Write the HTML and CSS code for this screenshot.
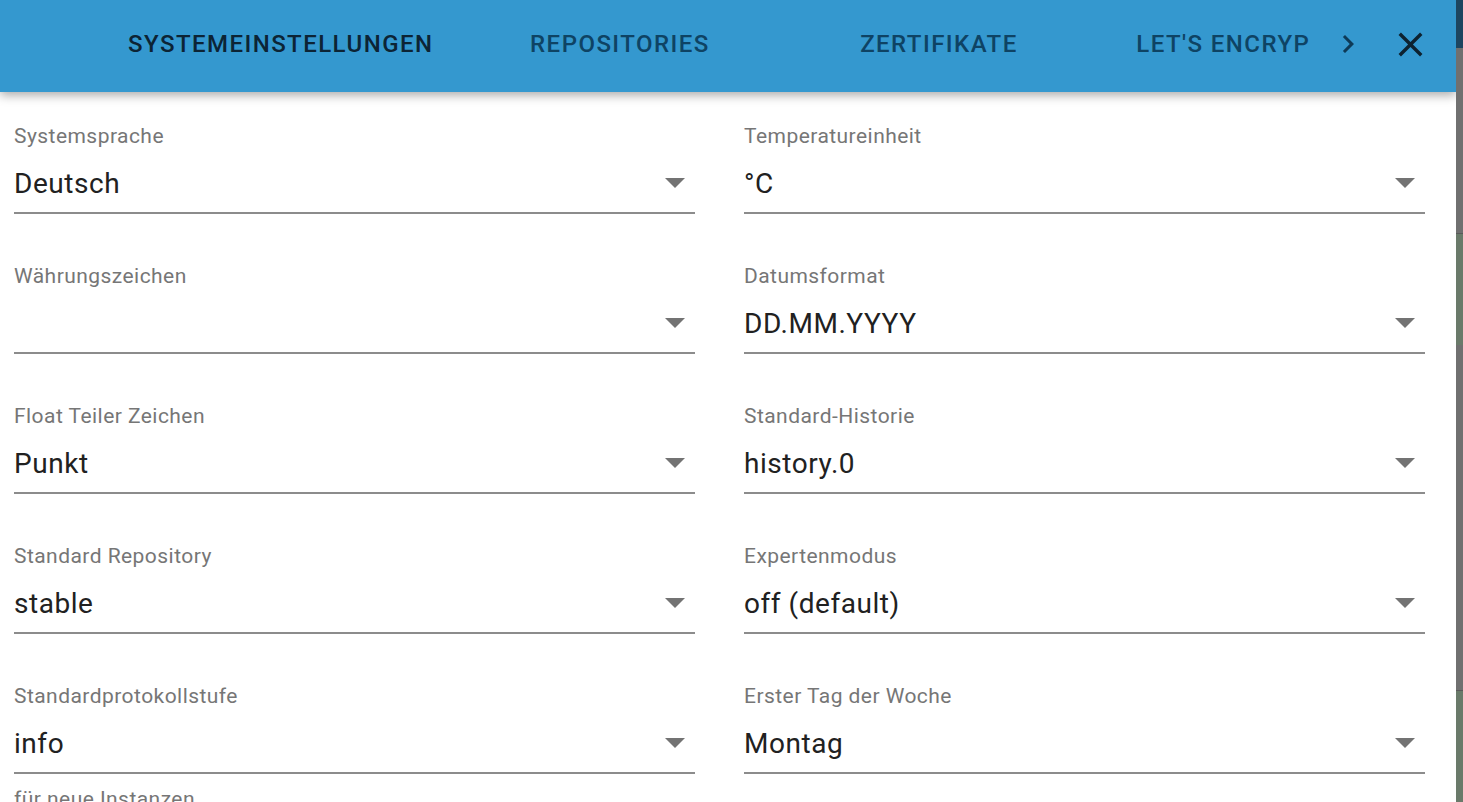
FILE: index.html
```html
<!DOCTYPE html>
<html lang="de">
<head>
    <meta charset="UTF-8">
    <meta name="viewport" content="width=device-width, initial-scale=1.0">
    <title>Systemeinstellungen</title>
    <link rel="stylesheet" href="styles.css">
</head>
<body>

    <div class="page">
        <div class="dialog">
            <!-- Tabs -->
            <div class="dialog-header">
                <div class="tabs">
                    <div class="tab selected">Systemeinstellungen</div>
                    <div class="tab">Repositories</div>
                    <div class="tab">Zertifikate</div>
                    <div class="tab">Let's Encrypt SSL</div>
                    <div class="tab">Standardrechte</div>
                </div>
                <div class="scroll-button">
                    <svg width="36" height="36" viewBox="0 0 24 24"><path d="M10 6L8.59 7.41 13.17 12l-4.58 4.59L10 18l6-6z"/></svg>
                </div>
                <div class="close-button">
                    <svg width="41" height="41" viewBox="0 0 24 24"><path d="M19 6.41L17.59 5 12 10.59 6.41 5 5 6.41 10.59 12 5 17.59 6.41 19 12 13.41 17.59 19 19 17.59 13.41 12z"/></svg>
                </div>
            </div>

            <!-- Settings form -->
            <div class="dialog-content">
                <div class="field">
                    <label>Systemsprache</label>
                    <div class="select"><span>Deutsch</span><svg class="arrow" width="20" height="10" viewBox="0 0 20 10"><path d="M0 0L10 10 20 0z"/></svg></div>
                </div>
                <div class="field">
                    <label>Temperatureinheit</label>
                    <div class="select"><span>°C</span><svg class="arrow" width="20" height="10" viewBox="0 0 20 10"><path d="M0 0L10 10 20 0z"/></svg></div>
                </div>
                <div class="field">
                    <label>Währungszeichen</label>
                    <div class="select"><span></span><svg class="arrow" width="20" height="10" viewBox="0 0 20 10"><path d="M0 0L10 10 20 0z"/></svg></div>
                </div>
                <div class="field">
                    <label>Datumsformat</label>
                    <div class="select"><span>DD.MM.YYYY</span><svg class="arrow" width="20" height="10" viewBox="0 0 20 10"><path d="M0 0L10 10 20 0z"/></svg></div>
                </div>
                <div class="field">
                    <label>Float Teiler Zeichen</label>
                    <div class="select"><span>Punkt</span><svg class="arrow" width="20" height="10" viewBox="0 0 20 10"><path d="M0 0L10 10 20 0z"/></svg></div>
                </div>
                <div class="field">
                    <label>Standard-Historie</label>
                    <div class="select"><span>history.0</span><svg class="arrow" width="20" height="10" viewBox="0 0 20 10"><path d="M0 0L10 10 20 0z"/></svg></div>
                </div>
                <div class="field">
                    <label>Standard Repository</label>
                    <div class="select"><span>stable</span><svg class="arrow" width="20" height="10" viewBox="0 0 20 10"><path d="M0 0L10 10 20 0z"/></svg></div>
                </div>
                <div class="field">
                    <label>Expertenmodus</label>
                    <div class="select"><span>off (default)</span><svg class="arrow" width="20" height="10" viewBox="0 0 20 10"><path d="M0 0L10 10 20 0z"/></svg></div>
                </div>
                <div class="field">
                    <label>Standardprotokollstufe</label>
                    <div class="select"><span>info</span><svg class="arrow" width="20" height="10" viewBox="0 0 20 10"><path d="M0 0L10 10 20 0z"/></svg></div>
                    <p class="helper">für neue Instanzen</p>
                </div>
                <div class="field">
                    <label>Erster Tag der Woche</label>
                    <div class="select"><span>Montag</span><svg class="arrow" width="20" height="10" viewBox="0 0 20 10"><path d="M0 0L10 10 20 0z"/></svg></div>
                </div>
            </div>
        </div>

        <!-- Backdrop behind the dialog -->
        <div class="backdrop">
            <div class="backdrop-top"></div>
            <div class="backdrop-gray"></div>
            <div class="backdrop-green"></div>
            <div class="backdrop-gray tall"></div>
            <div class="backdrop-green"></div>
        </div>
    </div>

</body>
</html>
```

FILE: styles.css
```css
body {
    font-family: Roboto, "Noto Sans", Arial, sans-serif;
    margin: 0;
    overflow: hidden;
    background: #6e6e6e;
}
.page {
    display: flex;
    height: 802px;
}
.dialog {
    width: 1456px;
    flex-shrink: 0;
    background: #fff;
    display: flex;
    flex-direction: column;
    overflow: hidden;
}

/* Header with tabs */
.dialog-header {
    position: relative;
    z-index: 1;
    height: 88px;
    flex-shrink: 0;
    display: flex;
    align-items: center;
    padding: 0 20px 4px 101px;
    background: #3498cf;
    box-shadow: 0 3px 10px rgba(0, 0, 0, 0.35);
}
.tabs {
    flex: 1;
    display: flex;
    overflow: hidden;
    height: 100%;
}
.tab {
    flex-shrink: 0;
    min-width: 319px;
    box-sizing: border-box;
    padding: 0 27px;
    display: flex;
    align-items: center;
    justify-content: center;
    white-space: nowrap;
    text-transform: uppercase;
    font-size: 24px;
    font-weight: 500;
    letter-spacing: 1.45px;
    color: #0e4364;
}
.tab.selected {
    color: #0c2435;
}
.scroll-button {
    width: 75px;
    box-sizing: border-box;
    padding-left: 3px;
    display: flex;
    justify-content: center;
}
.scroll-button svg {
    fill: #0e3a57;
}
.close-button {
    width: 52px;
    display: flex;
    justify-content: center;
}
.close-button svg {
    fill: #0d2230;
}

/* Form */
.dialog-content {
    display: grid;
    grid-template-columns: 681px 681px;
    column-gap: 49px;
    row-gap: 50px;
    padding: 32px 0 0 14px;
}
.field label {
    display: block;
    font-size: 21px;
    line-height: 24px;
    letter-spacing: 0.45px;
    color: #767676;
    margin-bottom: 18px;
}
.select {
    display: flex;
    align-items: center;
    justify-content: space-between;
    height: 34px;
    padding: 0 10px 12px 0;
    border-bottom: 2px solid #8c8c8c;
    font-size: 28px;
    letter-spacing: 0.55px;
    color: #212121;
}
.arrow {
    fill: #737373;
}
.helper {
    margin: 13px 0 0;
    font-size: 21px;
    line-height: 24px;
    letter-spacing: 0.45px;
    color: #767676;
}

/* Backdrop strip */
.backdrop {
    flex: 1;
    display: flex;
    flex-direction: column;
}
.backdrop-top {
    height: 50px;
    background: #1d4560;
}
.backdrop-gray {
    height: 190px;
    background: #707070;
    border-bottom: 1px solid #5a5a5a;
}
.backdrop-gray.tall {
    height: 355px;
}
.backdrop-green {
    height: 115px;
    background: #6a7a6a;
}
```
